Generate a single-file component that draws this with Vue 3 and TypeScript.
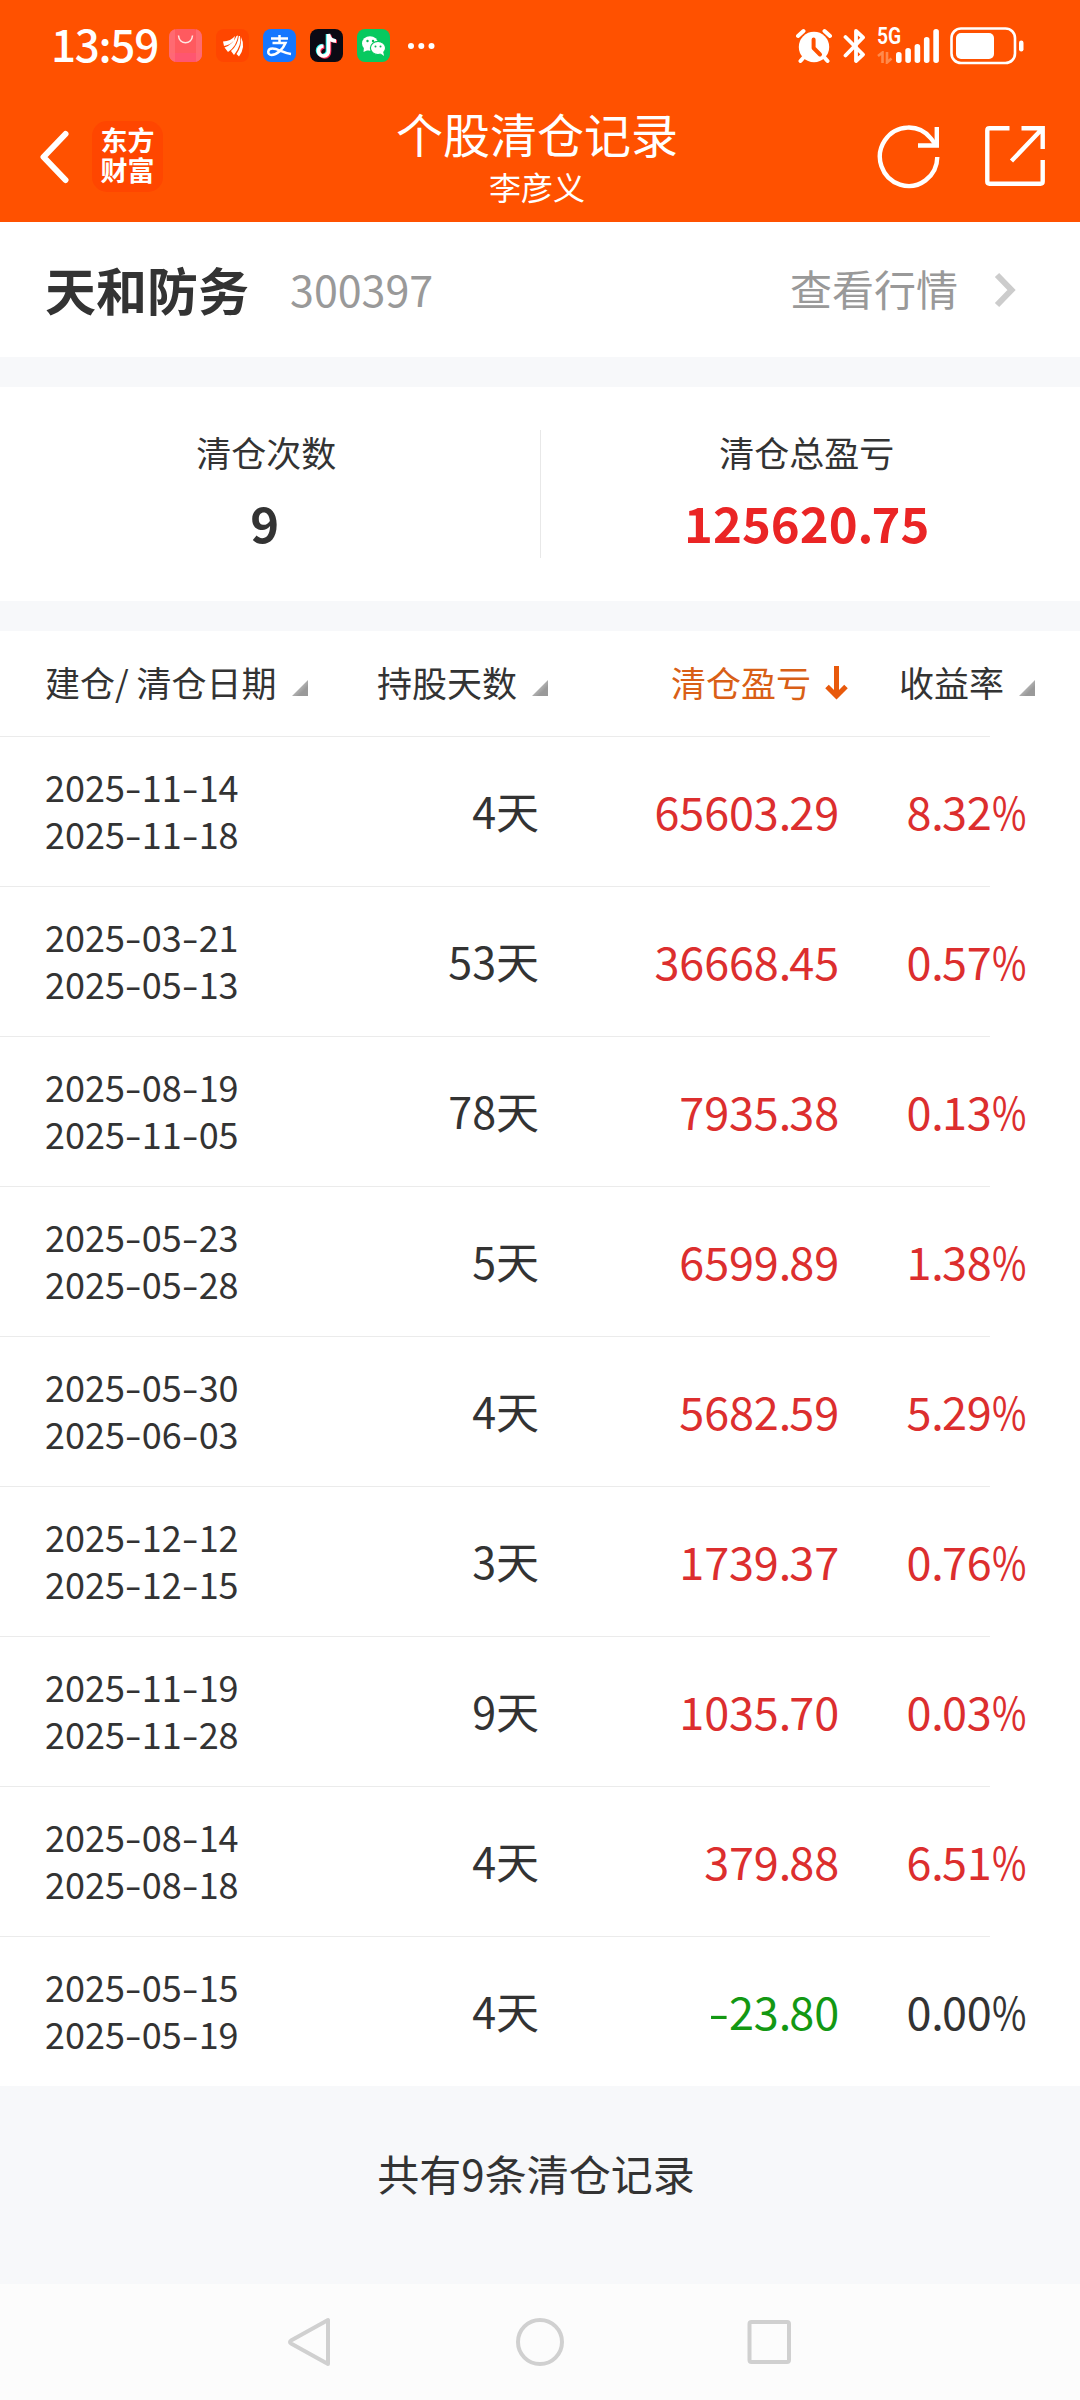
<script setup lang="ts">
interface ClearRecord {
  open: string
  close: string
  days: number
  profit: string
  rate: string
  tone: 'up' | 'down' | 'flat'
}

const records: ClearRecord[] = [
  { open: '2025-11-14', close: '2025-11-18', days: 4, profit: '65603.29', rate: '8.32', tone: 'up' },
  { open: '2025-03-21', close: '2025-05-13', days: 53, profit: '36668.45', rate: '0.57', tone: 'up' },
  { open: '2025-08-19', close: '2025-11-05', days: 78, profit: '7935.38', rate: '0.13', tone: 'up' },
  { open: '2025-05-23', close: '2025-05-28', days: 5, profit: '6599.89', rate: '1.38', tone: 'up' },
  { open: '2025-05-30', close: '2025-06-03', days: 4, profit: '5682.59', rate: '5.29', tone: 'up' },
  { open: '2025-12-12', close: '2025-12-15', days: 3, profit: '1739.37', rate: '0.76', tone: 'up' },
  { open: '2025-11-19', close: '2025-11-28', days: 9, profit: '1035.70', rate: '0.03', tone: 'up' },
  { open: '2025-08-14', close: '2025-08-18', days: 4, profit: '379.88', rate: '6.51', tone: 'up' },
  { open: '2025-05-15', close: '2025-05-19', days: 4, profit: '-23.80', rate: '0.00', tone: 'down' },
]

// Splits a figure so that dashes and dots can carry their own widths.
const pieces = (text: string): string[] => text.split(/([-.])/).filter((p) => p !== '')
const pieceClass = (p: string): string => (p === '-' ? 'dash' : p === '.' ? 'dot' : '')
</script>

<template>
  <div class="screen">
    <header class="top">
      <div class="status">
        <span class="time">13:59</span>
        <div class="apps">
          <svg width="33" height="33" viewBox="0 0 33 33">
            <rect width="33" height="33" rx="8" fill="#ff5a5f" />
            <path d="M0 24H33V25A8 8 0 0 1 25 33H8A8 8 0 0 1 0 25Z" fill="#ff5670" />
            <path d="M0 8A8 8 0 0 1 6 .3V32.700A8 8 0 0 1 0 25ZM33 8A8 8 0 0 0 27 .3V32.700A8 8 0 0 0 33 25Z" fill="#ff7079" opacity=".7" />
            <path d="M9.500 6.500C10 16 23 16 23.500 6.500" fill="none" stroke="#ffe9e4" stroke-width="1.500" />
          </svg>
          <svg width="33" height="33" viewBox="0 0 33 33">
            <rect width="33" height="33" rx="8" fill="#ff4600" />
            <path d="M7 12.500Q15 12 19 7L18 11.500Q14 16 8 17ZM8.500 18.500Q17 15.500 20.500 7L22 6.500Q21 17 12 23ZM15 22Q22 16 22.800 7L24 7Q26 16 18 26ZM20.500 25Q26 17 25 8Q30 18 23 27.500Z" fill="#fff" />
          </svg>
          <svg width="33" height="33" viewBox="0 0 33 33">
            <rect width="33" height="33" rx="8" fill="#1677ff" />
            <path d="M8 9.500H25M16.500 6V14M9.500 14H22.500C20 20 14 26 8.500 26C4 26 4 19.500 9.500 19.500C15 19.500 20 24 28 25" fill="none" stroke="#fff" stroke-width="2.500" />
          </svg>
          <svg width="33" height="33" viewBox="0 0 33 33">
            <rect width="33" height="33" rx="8" fill="#0b0a14" />
            <path d="M17.500 5V21A5 5 0 1 1 12.500 16.500M17.500 5C18 9 21 11.500 25 11.500" fill="none" stroke="#25f4ee" stroke-width="3.600" />
            <path d="M19.500 6V22.500A5 5 0 1 1 14.500 18M19.500 6C20 10 23 12.500 27 12.500" fill="none" stroke="#fe2c55" stroke-width="3.600" />
            <path d="M18.500 5V21.500A5 5 0 1 1 13.500 17M18.500 5C19 9.500 22 12 26 12" fill="none" stroke="#fff" stroke-width="3.600" />
          </svg>
          <svg width="33" height="33" viewBox="0 0 33 33">
            <rect width="33" height="33" rx="8" fill="#07c95f" />
            <path d="M7 18L6.500 23L11 21Z" fill="#fff" />
            <ellipse cx="13" cy="14.500" rx="8" ry="7.300" fill="#fff" />
            <ellipse cx="21" cy="19" rx="7.600" ry="6.600" fill="#fff" stroke="#07c95f" stroke-width="1.200" />
            <path d="M23 24L27 27L26 22Z" fill="#fff" />
            <g fill="#07b957"><circle cx="10.500" cy="12" r="1.200" /><circle cx="16" cy="12" r="1.200" /><circle cx="18.500" cy="17.500" r="1" /><circle cx="23.500" cy="17.500" r="1" /></g>
          </svg>
        </div>
        <svg class="more" width="28" height="8" viewBox="0 0 28 8" fill="#fff">
          <circle cx="4" cy="4" r="3" /><circle cx="14.300" cy="4" r="3" /><circle cx="24.500" cy="4" r="3" />
        </svg>
        <div class="system">
          <svg class="alarm" width="36" height="36" viewBox="0 0 36 36">
            <path d="M2 8L7.500 3M34 8L28.500 3M8 29L4.500 33M28 29L31.500 33" stroke="#fff" stroke-width="4" stroke-linecap="round" />
            <circle cx="18" cy="19" r="15.200" fill="#fff" />
            <path d="M17.600 11.500V20L24 26.500" fill="none" stroke="#ff5100" stroke-width="4" stroke-linecap="round" stroke-linejoin="round" />
          </svg>
          <svg class="bluetooth" width="24" height="36" viewBox="0 0 24 36">
            <path d="M2.500 9L20 26.500L13 33V3L20 9.500L2.500 27.500" fill="none" stroke="#fff" stroke-width="3.800" stroke-linecap="round" stroke-linejoin="round" />
          </svg>
          <div class="network">
            <div class="gen">
              <span class="gen-text">5G</span>
              <svg width="16" height="13" viewBox="0 0 16 13" fill="none" stroke="#ff8a4c" stroke-width="2.600">
                <path d="M1 5L5.500 1.500V12M10 1V11.500L14.500 7.500" />
              </svg>
            </div>
            <svg class="bars" width="44" height="36" viewBox="0 0 44 36" fill="#fff">
              <rect x="0" y="24" width="5.600" height="11" rx="2.700" />
              <rect x="9.300" y="20" width="5.600" height="15" rx="2.700" />
              <rect x="18.600" y="16" width="5.600" height="19" rx="2.700" />
              <rect x="27.900" y="9" width="5.600" height="26" rx="2.700" />
              <rect x="37.300" y="1" width="5.600" height="34" rx="2.700" />
            </svg>
          </div>
          <svg width="74" height="38" viewBox="0 0 74 38">
            <rect x="1.500" y="1.500" width="63.500" height="34.500" rx="9.500" fill="none" stroke="#fff" stroke-width="2.600" />
            <rect x="6" y="6" width="38" height="26" rx="5" fill="#fff" />
            <rect x="69" y="13.500" width="4.500" height="11" rx="2.200" fill="#fff" />
          </svg>
        </div>
      </div>

      <div class="titlebar">
        <div class="left">
          <svg width="31" height="54" viewBox="0 0 31 54">
            <path d="M27.500 4L5.500 27L27.500 50" fill="none" stroke="#fff" stroke-width="6" stroke-linecap="round" stroke-linejoin="round" />
          </svg>
          <div class="logo"><span>东方</span><span>财富</span></div>
        </div>
        <div class="titles">
          <h1>个股清仓记录</h1>
          <p>李彦义</p>
        </div>
        <div class="right">
          <svg width="64" height="64" viewBox="0 0 64 64" fill="none" stroke="#fff" stroke-width="4.400">
            <path d="M60.300 32A28.700 29.200 0 1 1 54 13.500L59 20" />
            <path d="M59.800 2V20.500H41" />
          </svg>
          <svg width="62" height="62" viewBox="0 0 62 62" fill="none" stroke="#fff" stroke-width="4.400">
            <path d="M25.500 2.300H5.500Q3.300 2.300 3.300 4.500V55.500Q3.300 57.700 5.500 57.700H56.500Q58.700 57.700 58.700 55.500V34" />
            <path d="M37.500 2.300H58.700V23M58.700 2.300L27.500 35" />
          </svg>
        </div>
      </div>
    </header>

    <section class="stock">
      <strong>天和防务</strong>
      <span class="code">300397</span>
      <span class="quote">查看行情</span>
      <svg width="24" height="38" viewBox="0 0 24 38">
        <path d="M3 4L17.500 19L3 34" fill="none" stroke="#ccc" stroke-width="6" />
      </svg>
    </section>

    <section class="stats">
      <div class="stat">
        <span class="label">清仓次数</span>
        <span class="value">9</span>
      </div>
      <div class="rule"></div>
      <div class="stat">
        <span class="label">清仓总盈亏</span>
        <span class="value red"><span v-for="(p, k) in pieces('125620.75')" :key="k" :class="pieceClass(p)">{{ p }}</span></span>
      </div>
    </section>

    <section class="table">
      <svg class="defs" width="0" height="0">
        <defs>
          <linearGradient id="corner" x1="0" y1="0" x2="1" y2="1">
            <stop offset=".4" stop-color="#bbb" />
            <stop offset=".7" stop-color="#999" />
          </linearGradient>
        </defs>
      </svg>
      <div class="head">
        <div class="th">建仓/ 清仓日期<svg class="tri" width="16" height="16" viewBox="0 0 16 16"><path d="M16 0V16H0Z" fill="url(#corner)" /></svg></div>
        <div class="th">持股天数<svg class="tri" width="16" height="16" viewBox="0 0 16 16"><path d="M16 0V16H0Z" fill="url(#corner)" /></svg></div>
        <div class="th active">清仓盈亏<svg class="arrow" width="23" height="34" viewBox="0 0 23 34"><path d="M11.500 0V30M2 20.500L11.500 30L21 20.500" fill="none" stroke="#e8590c" stroke-width="5" /></svg></div>
        <div class="th">收益率<svg class="tri" width="16" height="16" viewBox="0 0 16 16"><path d="M16 0V16H0Z" fill="url(#corner)" /></svg></div>
      </div>
      <div v-for="r in records" :key="r.open" class="record">
        <div class="line"></div>
        <div class="cells">
          <div class="dates">
            <span><span v-for="(p, k) in pieces(r.open)" :key="k" :class="pieceClass(p)">{{ p }}</span></span>
            <span><span v-for="(p, k) in pieces(r.close)" :key="k" :class="pieceClass(p)">{{ p }}</span></span>
          </div>
          <div class="days">{{ r.days }}天</div>
          <div class="num" :class="r.tone"><span v-for="(p, k) in pieces(r.profit)" :key="k" :class="pieceClass(p)">{{ p }}</span></div>
          <div class="num" :class="r.tone === 'up' ? 'up' : 'flat'"><span v-for="(p, k) in pieces(r.rate)" :key="k" :class="pieceClass(p)">{{ p }}</span><span class="pct">%</span></div>
        </div>
      </div>
    </section>

    <footer class="summary">共有9条清仓记录</footer>

    <nav class="nav">
      <svg width="46" height="52" viewBox="0 0 46 52"><path d="M41 4V48L4 27.500Q2 26 4 24.500Z" /></svg>
      <svg width="50" height="50" viewBox="0 0 50 50"><circle cx="25" cy="25" r="22" /></svg>
      <svg width="46" height="46" viewBox="0 0 46 46"><rect x="2.500" y="3" width="39.500" height="40" rx="2" /></svg>
    </nav>
  </div>
</template>

<style>
body {
  margin: 0;
  background: #f7f8fa;
}
</style>

<style scoped>
.screen {
  width: 1080px;
  height: 2400px;
  display: flex;
  flex-direction: column;
  background: #f7f8fa;
  color: #333;
  font-family: "Noto Sans CJK SC", "Noto Sans", sans-serif;
  overflow: hidden;
}
svg {
  display: block;
  flex: none;
}
.top {
  height: 222px;
  background: #ff5100;
  color: #fff;
}
.status {
  height: 91px;
  display: flex;
  align-items: center;
  padding: 0 56px 0 51px;
}
.time {
  width: 118px;
  font-size: 44px;
  line-height: 60px;
  font-weight: 500;
  margin-top: -5px;
  letter-spacing: -1.3px;
}
.apps {
  display: flex;
  gap: 14px;
}
.more {
  margin-left: 17px;
}
.system {
  margin-left: auto;
  display: flex;
  align-items: center;
}
.bluetooth {
  margin: 0 10px 0 11px;
}
.network {
  display: flex;
  margin-right: 10px;
}
.gen {
  width: 19px;
  height: 36px;
  display: flex;
  flex-direction: column;
  justify-content: space-between;
}
.gen-text {
  font-family: "Roboto", sans-serif;
  font-size: 23px;
  line-height: 18px;
  font-weight: 600;
  transform: scaleX(0.84);
  transform-origin: left;
  white-space: nowrap;
}
.titlebar {
  height: 131px;
  display: grid;
  grid-template-columns: 240px 1fr 246px;
}
.left {
  display: flex;
  align-items: center;
  padding: 0 0 0 38px;
}
.logo {
  width: 71px;
  height: 71px;
  margin-left: 23px;
  border-radius: 15px;
  background: #ff4600;
  display: flex;
  flex-direction: column;
  align-items: center;
  justify-content: center;
  font-size: 27px;
  line-height: 30px;
  font-weight: 700;
  padding-bottom: 3px;
  box-sizing: border-box;
}
.titles {
  padding-top: 16px;
  display: flex;
  flex-direction: column;
  align-items: center;
  gap: 7px;
}
.titles h1 {
  margin: 0;
  font-size: 47px;
  line-height: 52px;
  font-weight: 400;
}
.titles p {
  margin: 0;
  font-size: 32px;
  line-height: 40px;
}
.right {
  display: flex;
  align-items: center;
  gap: 43px;
  padding-left: 43px;
}
.stock {
  height: 135px;
  box-sizing: border-box;
  padding: 0 62px 3px 45px;
  display: flex;
  align-items: center;
  background: #fff;
}
.stock strong {
  font-size: 51px;
  line-height: 70px;
  font-weight: 700;
  margin-top: 2px;
}
.code {
  margin-left: 41px;
  font-size: 43px;
  line-height: 60px;
  color: #999;
}
.quote {
  margin-left: auto;
  margin-right: 36px;
  font-size: 42px;
  line-height: 60px;
  color: #999;
}
.stock svg {
  margin-top: 4px;
}
.stats {
  height: 214px;
  margin-top: 30px;
  display: flex;
  background: #fff;
}
.stat {
  flex: 1;
  display: flex;
  flex-direction: column;
  align-items: center;
  padding: 40px 7px 0 0;
  gap: 15px;
}
.rule {
  width: 1px;
  height: 128px;
  margin-top: 43px;
  background: #e8e8e8;
}
.label {
  font-size: 35px;
  line-height: 50px;
}
.value {
  font-size: 49px;
  line-height: 60px;
  font-weight: 700;
}
.stat:first-child .value {
  padding-right: 3px;
}
.red {
  color: #ea2525;
}
.table {
  margin-top: 30px;
  background: #fff;
}
.defs {
  position: absolute;
}
.head {
  height: 105px;
  box-sizing: border-box;
  padding: 0 0 3px 45px;
  display: grid;
  grid-template-columns: 332px 294px 228px 1fr;
  align-items: center;
}
.th {
  display: flex;
  align-items: center;
  gap: 15px;
  font-size: 35px;
  line-height: 50px;
  white-space: nowrap;
}
.active {
  color: #d95f16;
}
.tri {
  margin-top: 11px;
}
.arrow {
  margin: 1px 0 0 -1px;
}
.record {
  height: 150px;
}
.line {
  width: 990px;
  height: 1px;
  background: #ebebeb;
}
.cells {
  height: 149px;
  box-sizing: border-box;
  padding: 0 0 3px 45px;
  display: grid;
  grid-template-columns: 294px 200px 300px 187px;
  align-items: center;
}
.dates {
  display: flex;
  flex-direction: column;
  font-size: 36px;
  line-height: 47px;
}
.days {
  text-align: right;
  font-size: 43px;
}
.num {
  text-align: right;
  font-size: 45px;
  letter-spacing: -0.15px;
  white-space: nowrap;
}
.up {
  color: #dc2e2e;
}
.down {
  color: #139813;
}
.dash {
  display: inline-block;
  transform: scaleX(1.35);
  margin: 0 2.2px;
}
.dot {
  letter-spacing: -0.04em;
}
.pct {
  display: inline-block;
  transform: scaleX(0.83);
  transform-origin: left;
  margin-right: -7px;
}
.summary {
  height: 198px;
  box-sizing: border-box;
  padding: 0 8px 26px 0;
  display: flex;
  align-items: center;
  justify-content: center;
  font-size: 42px;
}
.nav {
  height: 116px;
  display: flex;
  align-items: center;
  padding-left: 287px;
  background: #fcfcfc;
}
.nav svg {
  fill: none;
  stroke: #d0d0d0;
  stroke-width: 4;
  stroke-linejoin: round;
}
.nav svg + svg {
  margin-left: 182px;
}
</style>
